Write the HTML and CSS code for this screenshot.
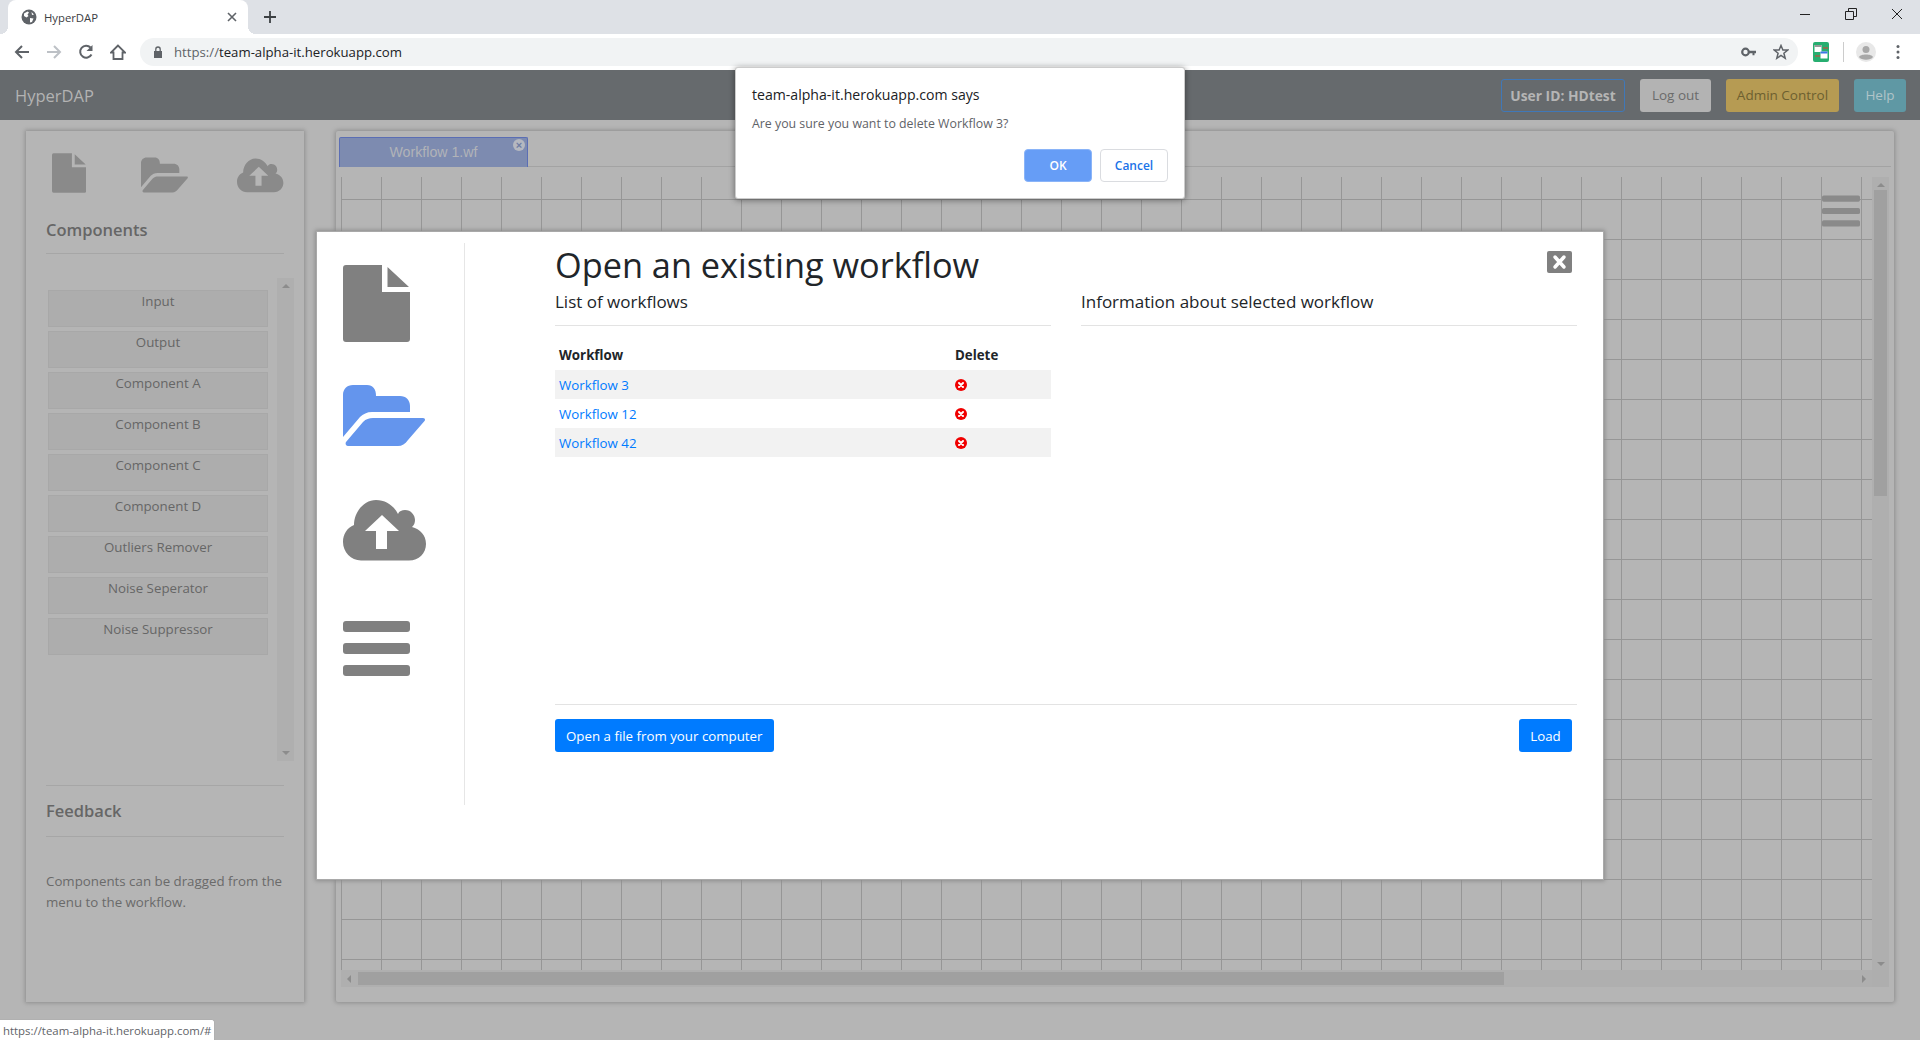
FILE: index.html
```html
<!DOCTYPE html>
<html lang="en">
<head>
    <meta charset="UTF-8">
    <title>HyperDAP</title>
    <link rel="stylesheet" href="styles.css">
</head>
<body>

<svg class="sprites" width="0" height="0">
    <symbol id="i-file" viewBox="0 0 67 77">
        <path d="M3 0H39V27H67V74a3 3 0 0 1-3 3H3a3 3 0 0 1-3-3V3a3 3 0 0 1 3-3zM44.500 2L66 22H44.500z"/>
    </symbol>
    <symbol id="i-folder" viewBox="0 0 82 61">
        <path d="M0 52V10C0 4 4 0 10 0H24C30 0 33 4 33 11H57C63 11 67 15 67 21V27H29C24 27 20 29 17 32z"/>
        <path d="M3 57L20 37C23 34 26 33 30 33H80C82 33 82.500 35 81.500 36L65 55C62 59 59 61 55 61H5C3 61 2 59 3 57z"/>
    </symbol>
    <symbol id="i-cloud" viewBox="0 0 84 61">
        <path fill-rule="evenodd" d="M18 60.500C8 60.500 0 52 0 42C0 34 4 28 11 25C11 12 21 0 33 0C43 0 51 6 55 14C56 11 59 10 62 10C68 10 72 15 72 20C72 23 71 25 69 27C77 29 83 35 83 44C83 53 76 60.500 66 60.500zM39 15L56 31H44V49H33V31H22z"/>
    </symbol>
    <symbol id="i-menu" viewBox="0 0 67 55">
        <rect width="67" height="11" rx="3"/>
        <rect y="22" width="67" height="11" rx="3"/>
        <rect y="44" width="67" height="11" rx="3"/>
    </symbol>
    <symbol id="i-del" viewBox="0 0 12 12">
        <circle cx="6" cy="6" r="6" fill="#f00000"/>
        <path d="M4 4L8 8M8 4L4 8" stroke="#fff" stroke-width="2" stroke-linecap="round"/>
    </symbol>
</svg>

<!-- browser -->
<div class="tabstrip">
    <div class="browser-tab">
        <svg class="favicon" width="16" height="16" viewBox="0 0 16 16">
            <circle cx="8" cy="8" r="7.500" fill="#5f6368"/>
            <path d="M3 4.500L6.500 2.500 8 3.500 6.500 5.500 7.500 7 5.500 8.500 3 7zM9 9L12.500 9.500 11 13 9 13.500zM10.500 3L13 5.500 11 6z" fill="#fff"/>
        </svg>
        <span class="browser-tab-title">HyperDAP</span>
        <svg class="browser-tab-x" width="10" height="10" viewBox="0 0 10 10"><path d="M1 1L9 9M9 1L1 9" stroke="#5f6368" stroke-width="1.600"/></svg>
    </div>
    <svg class="new-tab" width="12" height="12" viewBox="0 0 12 12"><path d="M6 0V12M0 6H12" stroke="#3c4043" stroke-width="1.800"/></svg>
    <div class="window-ctl">
        <svg width="12" height="12" viewBox="0 0 12 12"><path d="M1 6.500H11" stroke="#222" stroke-width="1"/></svg>
        <svg width="12" height="12" viewBox="0 0 12 12"><path d="M.5 3.500H8.500V11.500H.5zM3.500 3.500V.5H11.500V8.500H8.500" fill="none" stroke="#222" stroke-width="1"/></svg>
        <svg width="12" height="12" viewBox="0 0 12 12"><path d="M1 1L11 11M11 1L1 11" stroke="#222" stroke-width="1"/></svg>
    </div>
</div>
<div class="toolbar">
    <svg class="tb-icon" width="16" height="16" viewBox="0 0 16 16"><path d="M15 8H2M8 2L2 8 8 14" fill="none" stroke="#5f6368" stroke-width="2"/></svg>
    <svg class="tb-icon" width="16" height="16" viewBox="0 0 16 16"><path d="M1 8H14M8 2L14 8 8 14" fill="none" stroke="#bdc1c6" stroke-width="2"/></svg>
    <svg class="tb-icon" width="16" height="16" viewBox="0 0 16 16"><path d="M13.500 10.500A6 6 0 1 1 12.500 3.500" fill="none" stroke="#5f6368" stroke-width="2"/><path d="M14.500 1V7H8.500z" fill="#5f6368"/></svg>
    <svg class="tb-icon" width="16" height="16" viewBox="0 0 16 16"><path d="M8 1.500L1 8.500H3.500V15H12.500V8.500H15z" fill="none" stroke="#5f6368" stroke-width="1.800"/></svg>
    <div class="omnibox">
        <svg class="lock" width="10" height="12" viewBox="0 0 10 12"><path d="M1 5H9V12H1z" fill="#5f6368"/><path d="M2.800 5V3.200a2.200 2.200 0 0 1 4.400 0V5" fill="none" stroke="#5f6368" stroke-width="1.300"/></svg>
        <span class="url"><span class="url-scheme">https://</span>team-alpha-it.herokuapp.com</span>
        <svg class="key" width="15" height="10" viewBox="0 0 15 10"><circle cx="4.500" cy="5" r="3.300" fill="none" stroke="#5f6368" stroke-width="2.200"/><path d="M8 3.800H15V6.300H13.500V8.300H11.500V6.300H8z" fill="#5f6368"/></svg>
        <svg class="star" width="16" height="16" viewBox="0 0 16 16"><path d="M8 1.500L9.900 6H14.800L10.900 9.200 12.200 14.300 8 11.500 3.800 14.300 5.100 9.200 1.200 6H6.100z" fill="none" stroke="#5f6368" stroke-width="1.500"/></svg>
    </div>
    <svg class="ext" width="16" height="20" viewBox="0 0 16 20">
        <rect width="16" height="20" rx="2" fill="#27ae70"/>
        <rect x="1.500" y="3" width="7" height="7" fill="#fff"/><rect x="1.500" y="3" width="7" height="2" fill="#999"/>
        <rect x="7.500" y="9.500" width="7" height="7" fill="#fff"/><rect x="7.500" y="9.500" width="7" height="2" fill="#3b78e7"/>
        <path d="M10 6H15M2 14H7" stroke="#e53935" stroke-width="1.200"/>
    </svg>
    <span class="tb-sep"></span>
    <svg class="avatar" width="20" height="20" viewBox="0 0 20 20"><circle cx="10" cy="10" r="10" fill="#e8e8e8"/><circle cx="10" cy="7.500" r="3.500" fill="#a8a8a8"/><path d="M3 15C4 11.500 16 11.500 17 15C15 18.500 5 18.500 3 15z" fill="#a8a8a8"/></svg>
    <svg class="dots" width="4" height="16" viewBox="0 0 4 16"><circle cx="2" cy="2.500" r="1.500" fill="#5f6368"/><circle cx="2" cy="8" r="1.500" fill="#5f6368"/><circle cx="2" cy="13.500" r="1.500" fill="#5f6368"/></svg>
</div>

<!-- page -->
<nav class="navbar">
    <a class="brand">HyperDAP</a>
    <div class="nav-buttons">
        <span class="nav-btn btn-user">User ID: HDtest</span>
        <span class="nav-btn btn-logout">Log out</span>
        <span class="nav-btn btn-admin">Admin Control</span>
        <span class="nav-btn btn-help">Help</span>
    </div>
</nav>

<main class="main">
    <aside class="sidebar">
        <div class="side-icons">
            <svg class="si-file"><use href="#i-file"/></svg>
            <svg class="si-folder"><use href="#i-folder"/></svg>
            <svg class="si-cloud"><use href="#i-cloud"/></svg>
        </div>
        <h5 class="side-title">Components</h5>
        <div class="comp-wrap">
            <div class="comp-list">
                <div class="comp">Input</div>
                <div class="comp">Output</div>
                <div class="comp">Component A</div>
                <div class="comp">Component B</div>
                <div class="comp">Component C</div>
                <div class="comp">Component D</div>
                <div class="comp">Outliers Remover</div>
                <div class="comp">Noise Seperator</div>
                <div class="comp">Noise Suppressor</div>
            </div>
            <div class="side-scroll">
                <i class="arrow-up"></i>
                <i class="arrow-down"></i>
            </div>
        </div>
        <h5 class="side-title feedback-title">Feedback</h5>
        <p class="feedback">Components can be dragged from the menu to the workflow.</p>
    </aside>

    <section class="workspace">
        <div class="wf-tabs">
            <div class="wf-tab">Workflow 1.wf<span class="wf-tab-x">×</span></div>
        </div>
        <div class="canvas-view">
            <div class="canvas">
                <svg class="canvas-menu"><use href="#i-menu"/></svg>
            </div>
            <div class="vscroll">
                <i class="arrow-up"></i>
                <b class="vthumb"></b>
                <i class="arrow-down"></i>
            </div>
            <div class="hscroll">
                <i class="arrow-left"></i>
                <b class="hthumb"></b>
                <i class="arrow-right"></i>
            </div>
            <div class="corner"></div>
        </div>
    </section>
</main>

<!-- open workflow window -->
<div class="modal">
    <div class="modal-icons">
        <svg class="mi-file"><use href="#i-file"/></svg>
        <svg class="mi-folder"><use href="#i-folder"/></svg>
        <svg class="mi-cloud"><use href="#i-cloud"/></svg>
        <svg class="mi-menu"><use href="#i-menu"/></svg>
    </div>
    <div class="modal-body">
        <h1 class="modal-title">Open an existing workflow</h1>
        <div class="modal-cols">
            <div class="modal-col">
                <h5 class="col-title">List of workflows</h5>
                <table class="wf-table">
                    <thead>
                        <tr><th>Workflow</th><th class="del-col">Delete</th></tr>
                    </thead>
                    <tbody>
                        <tr><td><a>Workflow 3</a></td><td class="del-col"><svg class="del"><use href="#i-del"/></svg></td></tr>
                        <tr><td><a>Workflow 12</a></td><td class="del-col"><svg class="del"><use href="#i-del"/></svg></td></tr>
                        <tr><td><a>Workflow 42</a></td><td class="del-col"><svg class="del"><use href="#i-del"/></svg></td></tr>
                    </tbody>
                </table>
            </div>
            <div class="modal-col">
                <h5 class="col-title">Information about selected workflow</h5>
            </div>
        </div>
        <div class="modal-footer">
            <button class="btn-blue">Open a file from your computer</button>
            <button class="btn-blue btn-load">Load</button>
        </div>
    </div>
    <svg class="modal-close" width="25" height="22" viewBox="0 0 25 22">
        <rect width="25" height="22" rx="2" fill="#808080"/>
        <path d="M8 6L17 16M17 6L8 16" stroke="#fff" stroke-width="3.500" stroke-linecap="round"/>
    </svg>
</div>

<!-- confirm dialog -->
<div class="confirm">
    <div class="confirm-title">team-alpha-it.herokuapp.com says</div>
    <div class="confirm-text">Are you sure you want to delete Workflow 3?</div>
    <div class="confirm-buttons">
        <button class="confirm-ok">OK</button>
        <button class="confirm-cancel">Cancel</button>
    </div>
</div>

<div class="status-bubble">https://team-alpha-it.herokuapp.com/#</div>

</body>
</html>
```

FILE: styles.css
```css
* {
    box-sizing: border-box;
}
html, body {
    margin: 0;
    height: 1040px;
    overflow: hidden;
}
body {
    position: relative;
    font-family: "Open Sans", "Noto Sans", sans-serif;
    background: #b5b5b5;
    color: #212529;
}
h1, h5, p {
    margin: 0;
    font-weight: 400;
}
.sprites {
    position: absolute;
}

/* browser */
.tabstrip {
    height: 34px;
    background: #dee1e6;
    display: flex;
    align-items: center;
    padding-left: 8px;
}
.browser-tab {
    position: relative;
    width: 240px;
    height: 34px;
    background: #fff;
    border-radius: 8px 8px 0 0;
    display: flex;
    align-items: center;
    padding: 0 11px 0 13px;
}
.browser-tab::before, .browser-tab::after {
    content: "";
    position: absolute;
    bottom: 0;
    width: 8px;
    height: 8px;
}
.browser-tab::before {
    left: -8px;
    background: radial-gradient(circle at 0 0, transparent 8px, #fff 8px);
}
.browser-tab::after {
    right: -8px;
    background: radial-gradient(circle at 100% 0, transparent 8px, #fff 8px);
}
.browser-tab-title {
    margin-left: 7px;
    font-size: 11.300px;
    color: #3c4043;
    flex: 1;
}
.new-tab {
    margin-left: 16px;
}
.window-ctl {
    margin-left: auto;
    display: flex;
    gap: 34px;
    padding-right: 17px;
    align-self: flex-start;
    padding-top: 8px;
}
.toolbar {
    height: 36px;
    background: #fff;
    display: flex;
    align-items: center;
    padding-left: 14px;
}
.tb-icon {
    margin-right: 16px;
    flex: none;
}
.omnibox {
    width: 1658px;
    height: 28px;
    margin-left: -2px;
    background: #f1f3f4;
    border-radius: 14px;
    display: flex;
    align-items: center;
    padding: 0 9px 0 13px;
}
.url {
    margin-left: 11px;
    font-size: 13.200px;
    color: #202124;
    flex: 1;
}
.url-scheme {
    color: #5f6368;
}
.key {
    margin-right: 17px;
}
.ext {
    margin-left: 15px;
    flex: none;
}
.tb-sep {
    width: 1px;
    height: 20px;
    background: #ccc;
    margin-left: 14px;
}
.avatar {
    margin-left: 12px;
    flex: none;
}
.dots {
    margin-left: 20px;
    flex: none;
}

/* navbar */
.navbar {
    height: 50px;
    background: #666a6d;
    display: flex;
    align-items: center;
    justify-content: space-between;
    padding: 0 14px 0 15px;
}
.brand {
    font-size: 16.500px;
    color: #b3b3b3;
}
.nav-buttons {
    display: flex;
    gap: 15px;
}
.nav-btn {
    height: 33px;
    border-radius: 3px;
    font-size: 13.500px;
    display: flex;
    align-items: center;
    justify-content: center;
}
.btn-user {
    width: 124px;
    border: 1px solid #4078b8;
    color: #b5b5b5;
    font-size: 13.800px;
    font-weight: 700;
}
.btn-logout {
    width: 71px;
    background: #b3b3b3;
    color: #6b6b6b;
}
.btn-admin {
    width: 113px;
    background: #b69b53;
    color: #6d6030;
}
.btn-help {
    width: 52px;
    background: #5f98a4;
    color: #b0c4c8;
}

/* main layout */
.main {
    display: flex;
    gap: 32px;
    padding: 11px 26px 0;
    height: 881px;
}
.sidebar, .workspace {
    height: 871px;
    box-shadow: 0 0 4px 1px #8e8e8e;
}
.sidebar {
    width: 278px;
    flex: none;
    padding: 22px 20px 0 20px;
    color: #666;
}
.side-icons {
    display: flex;
    align-items: flex-end;
    height: 40px;
    padding-left: 6px;
    fill: #8a8a8a;
}
.si-file {
    width: 35px;
    height: 40px;
}
.si-folder {
    width: 48px;
    height: 36px;
    margin-left: 55px;
}
.si-cloud {
    width: 48px;
    height: 35px;
    margin-left: 49px;
}
.side-title {
    font-size: 16.500px;
    font-weight: 600;
    line-height: 24px;
    margin-top: 25px;
    padding-bottom: 11px;
    border-bottom: 1px solid #a6a6a6;
    color: #666;
}
.comp-wrap {
    display: flex;
    height: 483px;
    margin-top: 24px;
    margin-right: -10px;
    margin-left: 2px;
}
.comp-list {
    width: 220px;
    padding-top: 12px;
}
.comp {
    height: 37px;
    margin-bottom: 4px;
    background: #adadad;
    border: 1px solid #a8a8a8;
    font-size: 13.300px;
    line-height: 21px;
    text-align: center;
}
.side-scroll {
    width: 17px;
    margin-left: 9px;
    background: #afafaf;
    display: flex;
    flex-direction: column;
    justify-content: space-between;
    align-items: center;
    padding: 6px 0;
}
.arrow-up, .arrow-down, .arrow-left, .arrow-right {
    display: block;
    width: 0;
    height: 0;
    border: 4px solid transparent;
}
.arrow-up {
    border-top: 0;
    border-bottom: 4px solid #8c8c8c;
}
.arrow-down {
    border-bottom: 0;
    border-top: 4px solid #8c8c8c;
}
.arrow-left {
    border-left: 0;
    border-right: 4px solid #8c8c8c;
}
.arrow-right {
    border-right: 0;
    border-left: 4px solid #8c8c8c;
}
.feedback-title {
    margin-top: 24px;
    padding-top: 13px;
    border-top: 1px solid #a6a6a6;
    padding-bottom: 13px;
    margin-bottom: 34px;
}
.feedback {
    font-size: 13.300px;
    line-height: 21px;
    color: #6a6a6a;
    margin-right: -6px;
}
.workspace {
    flex: 1;
    border-radius: 2px;
    padding: 6px 5px 0 3px;
}
.wf-tabs {
    height: 30px;
    border-bottom: 1px solid #a3a3a3;
    margin-right: -2px;
}
.wf-tab {
    position: relative;
    width: 189px;
    height: 30px;
    background: #7d8bb0;
    border: 1px solid #5b6eb4;
    border-bottom: 0;
    border-radius: 2px 2px 0 0;
    font-family: "Liberation Sans", Arial, sans-serif;
    font-size: 14.200px;
    line-height: 29px;
    text-align: center;
    color: #b1b3b8;
}
.wf-tab-x {
    position: absolute;
    top: 1px;
    right: 2px;
    width: 12px;
    height: 12px;
    border-radius: 50%;
    background: #b5b8c0;
    color: #6f7da3;
    font-size: 11px;
    font-weight: 700;
    line-height: 12px;
}
.canvas-view {
    display: grid;
    grid-template-columns: 1531px 17px;
    grid-template-rows: 793px 17px;
    margin: 10px 0 0 2px;
}
.canvas {
    position: relative;
    background-image: linear-gradient(to right, #969696 1px, transparent 1px), linear-gradient(to bottom, #969696 1px, transparent 1px);
    background-size: 40px 40px;
    background-position: 0 0, 0 22px;
}
.canvas-menu {
    position: absolute;
    top: 18px;
    right: 12px;
    width: 38px;
    height: 32px;
    fill: #8a8a8a;
}
.vscroll {
    background: #afafaf;
    display: flex;
    flex-direction: column;
    align-items: center;
    padding-top: 6px;
}
.vthumb {
    display: block;
    width: 13px;
    height: 306px;
    margin-top: 3px;
    background: #a0a0a0;
}
.vscroll .arrow-down {
    margin-top: auto;
    margin-bottom: 4px;
}
.hscroll {
    background: #afafaf;
    display: flex;
    align-items: center;
    padding: 0 6px;
}
.hthumb {
    display: block;
    width: 1146px;
    height: 13px;
    margin-left: 7px;
    background: #a0a0a0;
}
.hscroll .arrow-right {
    margin-left: auto;
}
.corner {
    background: #aeaeae;
}

/* modal */
.modal {
    position: absolute;
    left: 317px;
    top: 232px;
    width: 1286px;
    height: 647px;
    background: #fff;
    box-shadow: 0 0 0 1px #a9a9a9, 0 0 4px 2px #8c8c8c;
    display: flex;
    align-items: flex-start;
    padding-top: 11px;
}
.modal-icons {
    width: 148px;
    height: 562px;
    flex: none;
    border-right: 1px solid #e6e6e6;
    display: flex;
    flex-direction: column;
    padding: 22px 0 0 26px;
    fill: #808080;
}
.mi-file {
    width: 67px;
    height: 77px;
}
.mi-folder {
    width: 82px;
    height: 61px;
    margin-top: 43px;
    fill: #6495ed;
}
.mi-cloud {
    width: 84px;
    height: 61px;
    margin-top: 54px;
}
.mi-menu {
    width: 67px;
    height: 55px;
    margin-top: 60px;
}
.modal-body {
    margin-left: 90px;
    width: 1022px;
}
.modal-title {
    font-size: 34.300px;
    line-height: 43px;
    font-weight: 500;
}
.modal-cols {
    display: flex;
    gap: 30px;
    height: 419px;
    border-bottom: 1px solid #e3e3e3;
}
.modal-col {
    width: 496px;
}
.col-title {
    font-size: 17px;
    line-height: 24px;
    padding: 4px 0 11px;
    border-bottom: 1px solid #e3e3e3;
    margin-bottom: 14px;
}
.wf-table {
    width: 100%;
    border-collapse: collapse;
    font-size: 13.300px;
}
.wf-table th {
    height: 30px;
    padding: 0 4px;
    text-align: left;
    font-weight: 700;
}
.wf-table td {
    height: 29px;
    padding: 0 4px;
}
.wf-table tbody tr:nth-child(odd) {
    background: #f2f2f2;
}
.wf-table a {
    color: #007bff;
}
.del-col {
    width: 100px;
}
.del {
    display: block;
    width: 12px;
    height: 12px;
}
.modal-footer {
    display: flex;
    justify-content: space-between;
    padding: 14px 5px 0 0;
}
.btn-blue {
    height: 33px;
    padding: 0 11px;
    background: #007bff;
    border: 0;
    border-radius: 3px;
    color: #fff;
    font-family: inherit;
    font-size: 13.300px;
}
.btn-load {
    width: 53px;
    padding: 0;
}
.modal-close {
    position: absolute;
    left: 1230px;
    top: 19px;
}

/* alert */
.confirm {
    position: absolute;
    left: 736px;
    top: 68px;
    width: 448px;
    height: 130px;
    background: #fff;
    border-radius: 2px;
    box-shadow: 0 0 0 1px #ccc, 0 1px 6px 1px rgba(0, 0, 0, 0.45);
    padding: 17px 16px 0;
}
.confirm-title {
    font-size: 14.100px;
    line-height: 20px;
    color: #202124;
}
.confirm-text {
    margin-top: 10px;
    font-size: 12.350px;
    line-height: 18px;
    color: #5f6368;
}
.confirm-buttons {
    display: flex;
    justify-content: flex-end;
    gap: 8px;
    margin-top: 16px;
}
.confirm-buttons button {
    width: 68px;
    height: 33px;
    border-radius: 4px;
    font-family: inherit;
    font-size: 12px;
    font-weight: 600;
}
.confirm-ok {
    background: #669df6;
    border: 1px solid #8ab4f8;
    color: #fff;
}
.confirm-cancel {
    background: #fff;
    border: 1px solid #dadce0;
    color: #1a73e8;
}

.status-bubble {
    position: absolute;
    left: 0;
    bottom: 0;
    height: 21px;
    padding: 0 3px;
    background: #fff;
    border: 1px solid #b0b0b0;
    border-width: 1px 1px 0 0;
    border-radius: 0 3px 0 0;
    font-size: 11.400px;
    line-height: 21px;
    color: #5f6368;
}
```
